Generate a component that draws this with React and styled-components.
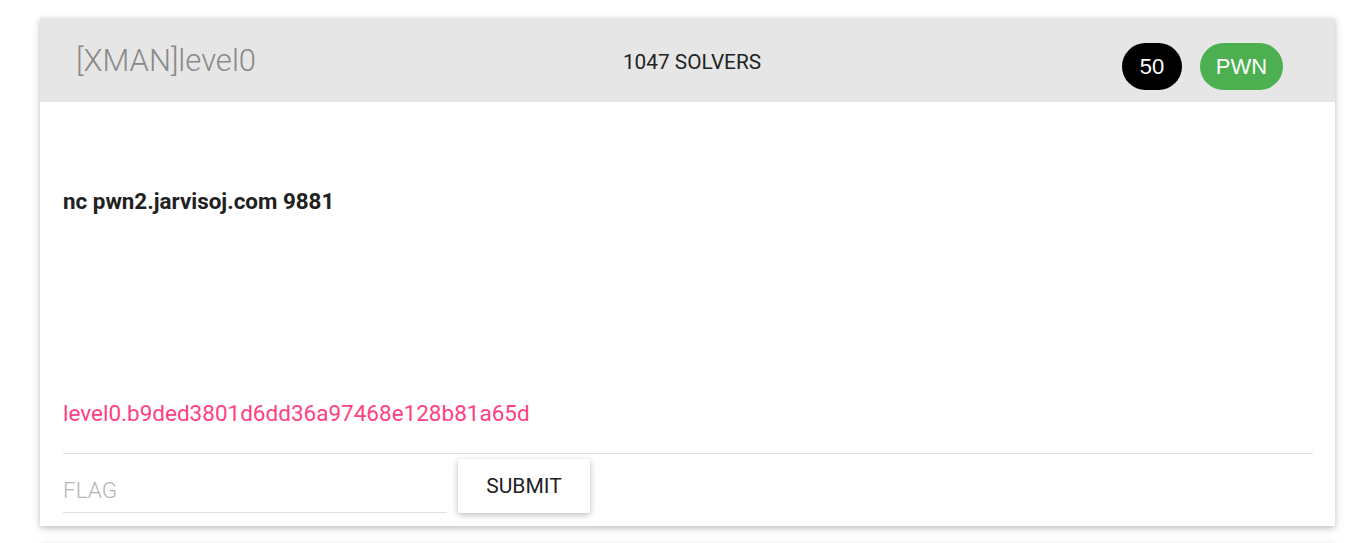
import React, { useState } from 'react';
import styled, { createGlobalStyle } from 'styled-components';

const GlobalStyle = createGlobalStyle`
  html, body {
    margin: 0;
    padding: 0;
    background: #ffffff;
    font-family: Roboto, "Liberation Sans", Arial, sans-serif;
  }
`;

const Page = styled.div`
  width: 1352px;
  height: 543px;
  overflow: hidden;
  padding: 0 17px 0 40px;
  box-sizing: border-box;
  display: flex;
  flex-direction: column;
  gap: 18px;
`;

const Card = styled.div`
  background: #fff;
  box-shadow: 0 2px 5px rgba(0, 0, 0, 0.16), 0 2px 10px rgba(0, 0, 0, 0.12);
  flex-shrink: 0;
  height: ${props => props.stub ? '0' : 'auto'};
`;

const CardHeader = styled.div`
  background: #e6e6e6;
  height: 84px;
  display: grid;
  grid-template-columns: 1fr auto 1fr;
  align-items: center;
  padding: 0 27px 0 36px;
`;

const Title = styled.h2`
  margin: 0;
  font-size: 31px;
  font-weight: 300;
  color: #8a8a8a;
`;

const Solvers = styled.div`
  font-size: 20.8px;
  color: #222;
  text-transform: uppercase;
  position: relative;
  top: 2px;
`;

const Badges = styled.div`
  display: flex;
  justify-content: flex-end;
  gap: 18px;
  padding: 13px 25px 0 0;
`;

const Badge = styled.span`
  display: inline-flex;
  align-items: center;
  justify-content: center;
  height: 47px;
  min-width: ${props => props.wide ? '83px' : '60px'};
  border-radius: 24px;
  background: ${props => props.color};
  color: #fff;
  font-family: "Liberation Sans", Arial, sans-serif;
  font-size: 22px;
  box-sizing: border-box;
`;

const CardBody = styled.div`
  padding: 86px 22px 13px 23px;
`;

const Description = styled.p`
  margin: 0;
  font-size: 22.4px;
  line-height: 26px;
  font-weight: 700;
  color: #212121;
  height: 212px;
`;

const Hint = styled.div`
  font-size: 22.5px;
  line-height: 26px;
  color: #ff4081;
  padding-bottom: 27px;
  border-bottom: 1px solid #e0e0e0;
`;

const FlagForm = styled.form`
  display: flex;
  align-items: flex-start;
  gap: 11px;
  padding-top: 5px;
`;

const FlagInput = styled.input`
  width: 384px;
  height: 54px;
  border: none;
  border-bottom: 1px solid #e0e0e0;
  outline: none;
  padding: 8px 0 0;
  box-sizing: border-box;
  font-family: Roboto, "Liberation Sans", Arial, sans-serif;
  font-size: 22.5px;
  color: #222;
  background: transparent;

  &::placeholder {
    color: #b5b5b5;
    font-weight: 300;
  }
`;

const SubmitButton = styled.button`
  width: 132px;
  height: 54px;
  border: none;
  border-radius: 2px;
  background: #fff;
  box-shadow: 0 2px 5px rgba(0, 0, 0, 0.16), 0 2px 10px rgba(0, 0, 0, 0.12);
  font-family: Roboto, "Liberation Sans", Arial, sans-serif;
  font-size: 21px;
  color: #222;
  text-transform: uppercase;
  cursor: pointer;
  padding: 0;
`;

const App = () => {
  const [flag, setFlag] = useState('');

  return (
    <>
      <GlobalStyle />
      <Page>
        <Card stub />
        <Card>
          <CardHeader>
            <Title>[XMAN]level0</Title>
            <Solvers>1047 Solvers</Solvers>
            <Badges>
              <Badge color="#000">50</Badge>
              <Badge color="#4caf50" wide>PWN</Badge>
            </Badges>
          </CardHeader>
          <CardBody>
            <Description>nc pwn2.jarvisoj.com 9881</Description>
            <Hint>level0.b9ded3801d6dd36a97468e128b81a65d</Hint>
            <FlagForm onSubmit={e => e.preventDefault()}>
              <FlagInput
                placeholder="FLAG"
                value={flag}
                onChange={e => setFlag(e.target.value)}
              />
              <SubmitButton type="submit">Submit</SubmitButton>
            </FlagForm>
          </CardBody>
        </Card>
        <Card>
          <CardHeader />
        </Card>
      </Page>
    </>
  );
};

export default App;
